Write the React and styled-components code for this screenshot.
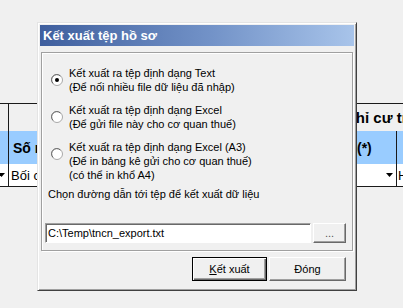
import React from 'react';
import styled, { createGlobalStyle } from 'styled-components';

const GlobalStyle = createGlobalStyle`
  html, body {
    margin: 0;
    padding: 0;
    background: #f0f0f0;
  }
  body {
    font-family: "Liberation Sans", Arial, sans-serif;
    font-size: 11px;
    color: #000;
  }
`;

const Screen = styled.div`
  position: relative;
  width: 403px;
  height: 308px;
  overflow: hidden;
  background: #f0f0f0;
`;

// background sheet (data grid behind the dialog)
const Sheet = styled.div`
  display: grid;
  grid-template-columns: 8px 300px 88px 1fr;
  grid-template-rows: 28px 33px 23px;
  padding-top: 103px;
`;

const Cell = styled.div`
  box-sizing: border-box;
  display: flex;
  align-items: center;
  overflow: hidden;
  white-space: nowrap;
  background: ${(p) => p.$bg || 'transparent'};
  border-top: ${(p) => (p.$top ? '1px solid #1a1a1a' : '0')};
  border-bottom: ${(p) => (p.$bottom ? '1px solid #1a1a1a' : '0')};
  border-left: ${(p) => (p.$left ? '1px solid #1a1a1a' : '0')};
  grid-column: ${(p) => p.$span || 'auto'};
  justify-content: ${(p) => (p.$end ? 'flex-end' : 'flex-start')};
  padding-left: ${(p) => p.$pad || 0}px;
  padding-right: ${(p) => p.$padRight || 0}px;
  font-size: ${(p) => p.$size || 13}px;
  font-weight: ${(p) => (p.$bold ? 700 : 400)};
`;

const DropArrow = () => (
  <svg width="7" height="4" viewBox="0 0 7 4" style={{ flex: 'none' }}>
    <polygon points="0,0 7,0 3.5,4" fill="#000" />
  </svg>
);

// dialog window
const Dialog = styled.div`
  position: absolute;
  left: 37px;
  top: 22px;
  width: 320px;
  height: 269px;
  box-sizing: border-box;
  background: #f0f0f0;
  border: 1px solid;
  border-color: #e4e4e4 #404040 #404040 #e4e4e4;
  box-shadow: inset 1px 1px #fff, inset -1px -1px #a0a0a0;
  padding: 2px;
  display: flex;
  flex-direction: column;
`;

const TitleBar = styled.div`
  height: 21px;
  flex: none;
  display: flex;
  align-items: center;
  padding-left: 3px;
  background: linear-gradient(to right, #3f5f9e 0%, #7393c8 55%, #a8c4ea 100%);
  color: #fff;
  font-size: 13px;
  font-weight: 700;
`;

const Body = styled.div`
  flex: 1;
  display: flex;
  flex-direction: column;
  padding: 6px 1px 0 1px;
`;

const GroupBox = styled.div`
  height: 199px;
  box-sizing: border-box;
  border: 1px solid #a0a0a0;
  box-shadow: inset 1px 1px #fff, 1px 1px #fff;
  padding: 13px 0 0 0;
  display: flex;
  flex-direction: column;
`;

const Option = styled.label`
  display: flex;
  align-items: flex-start;
  gap: 6px;
  margin-left: 9px;
  margin-bottom: 9px;
  line-height: 14px;
`;

const RadioBox = styled.span`
  flex: none;
  width: 12px;
  height: 12px;
  margin-top: 8px;
  display: block;
`;

const Radio = ({ checked }) => (
  <RadioBox>
    <svg width="12" height="12" viewBox="0 0 12 12">
      <circle cx="6" cy="6" r="5.5" fill="#fff" stroke="#a8a8a8" />
      <path d="M2.1 9.4 A4.9 4.9 0 0 1 9.4 2.1" fill="none" stroke="#6a6a6a" strokeWidth="1" />
      {checked && <circle cx="6" cy="6" r="2" fill="#000" />}
    </svg>
  </RadioBox>
);

const Caption = styled.div`
  margin: -4px 0 0 6px;
  line-height: 14px;
`;

const PathRow = styled.div`
  display: flex;
  gap: 2px;
  margin: 22px 0 0 3px;
`;

const PathInput = styled.div`
  width: 266px;
  height: 20px;
  box-sizing: border-box;
  background: #fff;
  border: 1px solid;
  border-color: #a0a0a0 #fff #fff #a0a0a0;
  box-shadow: inset 1px 1px #696969;
  padding: 0 0 0 2px;
  display: flex;
  align-items: center;
  font-size: 11px;
`;

const Button = styled.div`
  box-sizing: border-box;
  width: ${(p) => p.$w}px;
  height: ${(p) => p.$h}px;
  display: flex;
  align-items: center;
  justify-content: center;
  background: #f0f0f0;
  border: 1px solid;
  border-color: ${(p) => (p.$default ? '#000' : '#fff #696969 #696969 #fff')};
  box-shadow: ${(p) =>
    p.$default
      ? 'inset 1px 1px #fff, inset -1px -1px #696969, inset -2px -2px #a0a0a0'
      : 'inset -1px -1px #a0a0a0'};
  color: ${(p) => (p.$muted ? '#555' : '#000')};
  font-size: 11px;
`;

const ButtonRow = styled.div`
  display: flex;
  justify-content: flex-end;
  gap: 2px;
  margin-top: 6px;
  padding-right: 7px;
`;

const options = [
  { checked: true, lines: ['Kết xuất ra tệp định dạng Text', '(Để nối nhiều file dữ liệu đã nhập)'] },
  { checked: false, lines: ['Kết xuất ra tệp định dạng Excel', '(Để gửi file này cho cơ quan thuế)'] },
  {
    checked: false,
    lines: ['Kết xuất ra tệp định dạng Excel (A3)', '(Để in bảng kê gửi cho cơ quan thuế)', '(có thể in khổ A4)'],
  },
];

export default function App() {
  return (
    <Screen>
      <GlobalStyle />
      <Sheet>
        <Cell $top />
        <Cell $top $left $span="2 / 5" $bold $size={15} $pad={311}>
          Địa chỉ cư trú
        </Cell>

        <Cell $bg="#99ccff" />
        <Cell $bg="#99ccff" $left $bold $size={14} $pad={4}>
          Số người phụ thuộc
        </Cell>
        <Cell $bg="#99ccff" $bold $size={14} $pad={49}>
          (*)
        </Cell>
        <Cell $bg="#99ccff" $left />

        <Cell $bg="#fff" $bottom $end $padRight={3}>
          <DropArrow />
        </Cell>
        <Cell $bg="#fff" $bottom $left $pad={2}>
          Bối cảnh
        </Cell>
        <Cell $bg="#fff" $bottom $end $padRight={3}>
          <DropArrow />
        </Cell>
        <Cell $bg="#fff" $bottom $left $pad={1}>
          Hà Nội
        </Cell>
      </Sheet>

      <Dialog>
        <TitleBar>Kết xuất tệp hồ sơ</TitleBar>
        <Body>
          <GroupBox>
            {options.map((o, i) => (
              <Option key={i}>
                <Radio checked={o.checked} />
                <div>
                  {o.lines.map((l) => (
                    <div key={l}>{l}</div>
                  ))}
                </div>
              </Option>
            ))}
            <Caption>Chọn đường dẫn tới tệp để kết xuất dữ liệu</Caption>
            <PathRow>
              <PathInput>C:\Temp\tncn_export.txt</PathInput>
              <Button $w={33} $h={20} $muted>...</Button>
            </PathRow>
          </GroupBox>
          <ButtonRow>
            <Button $w={75} $h={24} $default>
              <span><u>K</u>ết xuất</span>
            </Button>
            <Button $w={77} $h={24}>
              <span>Đón<u>g</u></span>
            </Button>
          </ButtonRow>
        </Body>
      </Dialog>
    </Screen>
  );
}
